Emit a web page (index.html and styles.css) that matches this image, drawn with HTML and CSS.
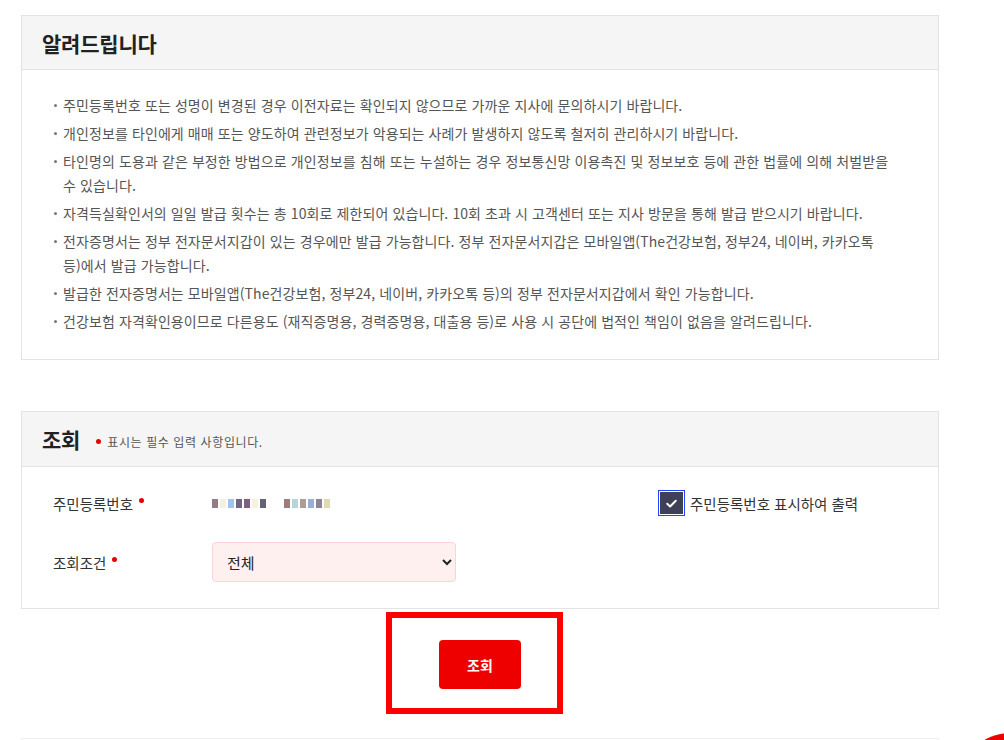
FILE: index.html
```html
<!DOCTYPE html>
<html lang="ko">

<head>
    <meta charset="UTF-8">
    <meta name="viewport" content="width=device-width, initial-scale=1.0">
    <title>자격득실확인서 발급</title>
    <link rel="stylesheet" href="styles.css">
</head>

<body>

    <div class="page">
        <div class="box notice">
            <div class="box-head">
                <h3>알려드립니다</h3>
            </div>
            <ul class="notice-list">
                <li>주민등록번호 또는 성명이 변경된 경우 이전자료는 확인되지 않으므로 가까운 지사에 문의하시기 바랍니다.</li>
                <li>개인정보를 타인에게 매매 또는 양도하여 관련정보가 악용되는 사례가 발생하지 않도록 철저히 관리하시기 바랍니다.</li>
                <li>타인명의 도용과 같은 부정한 방법으로 개인정보를 침해 또는 누설하는 경우 정보통신망 이용촉진 및 정보보호 등에 관한 법률에 의해 처벌받을 수 있습니다.</li>
                <li>자격득실확인서의 일일 발급 횟수는 총 10회로 제한되어 있습니다. 10회 초과 시 고객센터 또는 지사 방문을 통해 발급 받으시기 바랍니다.</li>
                <li>전자증명서는 정부 전자문서지갑이 있는 경우에만 발급 가능합니다. 정부 전자문서지갑은 모바일앱(The건강보험, 정부24, 네이버, 카카오톡 등)에서 발급 가능합니다.</li>
                <li>발급한 전자증명서는 모바일앱(The건강보험, 정부24, 네이버, 카카오톡 등)의 정부 전자문서지갑에서 확인 가능합니다.</li>
                <li>건강보험 자격확인용이므로 다른용도 (재직증명용, 경력증명용, 대출용 등)로 사용 시 공단에 법적인 책임이 없음을 알려드립니다.</li>
            </ul>
        </div>

        <div class="box search">
            <div class="box-head">
                <h3>조회</h3>
                <span class="req-note"><i class="dot"></i>표시는 필수 입력 사항입니다.</span>
            </div>
            <div class="form-body">
                <div class="form-row">
                    <div class="form-label">주민등록번호<i class="dot"></i></div>
                    <div class="form-value">
                        <span class="masked">
                            <b style="background:#7a5a66"></b><b style="background:#f2ecd2"></b><b style="background:#8ab6e0"></b><b style="background:#4c3e66"></b><b style="background:#5a3a5e"></b><b style="background:#f5efd8"></b><b style="background:#3c3c52"></b>
                        </span>
                        <span class="masked">
                            <b style="background:#8a5a5a"></b><b style="background:#a8c8d4"></b><b style="background:#9a8478"></b><b style="background:#7e9ac8"></b><b style="background:#6e6480"></b><b style="background:#d8d0a0"></b>
                        </span>
                    </div>
                    <label class="check">
                        <span class="check-box">
                            <span class="check-fill">
                                <svg width="15" height="15" viewBox="0 0 14 14"><path d="M3 7.2l2.7 2.6L11 4.4" fill="none" stroke="#fff" stroke-width="1.8" stroke-linecap="round" stroke-linejoin="round"/></svg>
                            </span>
                        </span>
                        주민등록번호 표시하여 출력
                    </label>
                </div>
                <div class="form-row">
                    <div class="form-label">조회조건<i class="dot"></i></div>
                    <div class="form-value">
                        <select class="select">
                            <option>전체</option>
                            <option>직장</option>
                            <option>지역</option>
                        </select>
                    </div>
                </div>
            </div>
        </div>

        <div class="btn-area">
            <button class="btn-red">조회</button>
            <div class="mark"></div>
        </div>

        <div class="box next"></div>
    </div>

    <div class="float-btn"></div>

</body>

</html>
```

FILE: styles.css
```css
* {
    margin: 0;
    padding: 0;
    box-sizing: border-box;
    font-family: "Noto Sans CJK KR", "Noto Sans", sans-serif;
}

body {
    background: #fff;
    color: #333;
    overflow: hidden;
}

.page {
    width: 918px;
    margin-left: 21px;
    padding-top: 15px;
}

.box {
    border: 1px solid #e3e3e3;
    background: #fff;
}

.box-head {
    display: flex;
    align-items: center;
    height: 54px;
    padding-left: 20px;
    background: #f5f5f5;
    border-bottom: 1px solid #e3e3e3;
}

.box-head h3 {
    font-size: 21px;
    font-weight: bold;
    letter-spacing: -0.2px;
    color: #222;
}

.notice-list {
    list-style: none;
    padding: 23px 44px 26px 32px;
}

.notice-list li {
    display: flex;
    font-size: 14px;
    line-height: 24px;
    letter-spacing: 0.1px;
    color: #555;
    margin-bottom: 4px;
    word-break: keep-all;
}

.notice-list li:last-child {
    margin-bottom: 0;
}

.notice-list li::before {
    content: "";
    flex: none;
    width: 3px;
    height: 3px;
    margin: 11px 6px 0 0;
    border-radius: 50%;
    background: #777;
}

.search {
    margin-top: 51px;
}

.search .box-head {
    height: 55px;
}

.req-note {
    display: flex;
    align-items: center;
    margin-left: 16px;
    margin-top: 4px;
    font-size: 12px;
    letter-spacing: 0.6px;
    color: #555;
}

.dot {
    display: inline-block;
    width: 5px;
    height: 5px;
    border-radius: 50%;
    background: #e60000;
}

.req-note .dot {
    margin-right: 6px;
}

.form-body {
    padding: 16px 0 26px 31px;
}

.form-row {
    display: flex;
    align-items: center;
    height: 40px;
}

.form-row + .form-row {
    margin-top: 19px;
}

.form-label {
    display: flex;
    align-items: center;
    width: 159px;
    font-size: 14.5px;
    color: #333;
}

.form-label .dot {
    margin-left: 6px;
    margin-top: -6px;
}

.form-value {
    display: flex;
    align-items: center;
    width: 446px;
}

.masked {
    display: flex;
    margin-right: 16px;
}

.masked b {
    width: 6px;
    height: 9px;
    margin-right: 2px;
    opacity: 0.8;
}

.select {
    width: 244px;
    height: 40px;
    padding: 0 8px 0 10px;
    font-size: 15px;
    color: #222;
    background: #fff0f0;
    border: 1px solid #fbd3d3;
    border-radius: 4px;
    outline: none;
}

.check {
    display: flex;
    align-items: center;
    font-size: 14.5px;
    color: #333;
    cursor: pointer;
}

.check-box {
    display: flex;
    width: 27px;
    height: 26px;
    padding: 1px;
    margin-right: 5px;
    border: 1px solid #2244ff;
    background: #fff;
}

.check-fill {
    flex: 1;
    display: flex;
    align-items: center;
    justify-content: center;
    background: #3e4058;
}

.btn-area {
    position: relative;
    display: flex;
    justify-content: center;
    padding: 31px 0 49px;
}

.btn-red {
    width: 82px;
    height: 49px;
    border: none;
    border-radius: 4px;
    background: #ee0000;
    color: #fff;
    font-size: 14px;
    font-weight: bold;
    cursor: pointer;
}

/* 강조 표시 */
.mark {
    position: absolute;
    left: 365px;
    top: 3px;
    width: 177px;
    height: 102px;
    border: 6px solid #ff0000;
}

.next {
    height: 60px;
    border-color: #eeeeee;
}

.float-btn {
    position: fixed;
    left: 960px;
    top: 733px;
    width: 100px;
    height: 100px;
    border-radius: 50%;
    background: #ee0000;
}
```
